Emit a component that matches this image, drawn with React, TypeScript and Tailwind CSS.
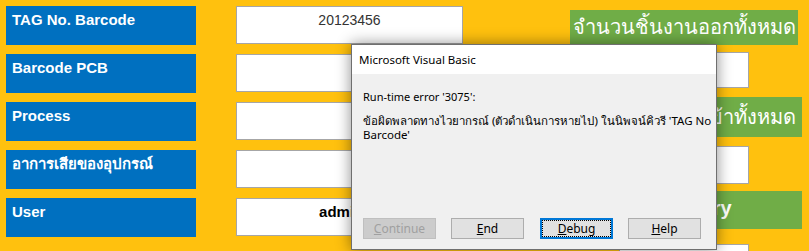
const labels = ["TAG No. Barcode", "Barcode PCB", "Process", "อาการเสียของอุปกรณ์", "User"];

const inputs = [
  { value: "20123456", cls: "text-[14px] text-[#333] font-normal text-center" },
  { value: "", cls: "" },
  { value: "", cls: "" },
  { value: "", cls: "" },
  { value: "admin01", cls: "text-[15px] text-black font-bold text-center" },
];

function DialogButton({
  first,
  rest,
  disabled,
  focused,
}: {
  first: string;
  rest: string;
  disabled?: boolean;
  focused?: boolean;
}) {
  return (
    <div
      className={
        "w-[73px] h-[21px] flex items-center justify-center text-[12px] " +
        (disabled
          ? "bg-[#cccccc] border border-[#bfbfbf] text-[#a0a0a0]"
          : focused
            ? "bg-[#e1e1e1] border-2 border-[#0078d7] text-black"
            : "bg-[#e1e1e1] border border-[#adadad] text-black")
      }
    >
      {focused ? (
        <span className="w-[67px] h-[15px] flex items-center justify-center outline outline-1 outline-dotted outline-black">
          <span className="underline">{first}</span>
          {rest}
        </span>
      ) : (
        <span>
          <span className="underline">{first}</span>
          {rest}
        </span>
      )}
    </div>
  );
}

export default function App() {
  return (
    <div
      className="relative w-[809px] h-[251px] overflow-hidden bg-[#ffc10e]"
      style={{ fontFamily: '"Liberation Sans", Arial, sans-serif' }}
    >
      <div className="flex">
        {/* labels */}
        <div className="flex flex-col gap-[9px] pt-[6px] pl-[6px] w-[196px]">
          {labels.map((l) => (
            <div
              key={l}
              className="h-[39px] bg-[#0070c0] text-white font-bold text-[15px] leading-[18px] pl-[6px] pt-[5px]"
            >
              {l}
            </div>
          ))}
        </div>

        {/* inputs */}
        <div className="flex flex-col gap-[10px] pt-[6px] ml-[40px] w-[227px]">
          {inputs.map((i, idx) => (
            <div
              key={idx}
              className={"h-[38px] bg-white border border-[#a6a6a6] pt-[4px] leading-[18px] " + i.cls}
            >
              {i.value}
            </div>
          ))}
        </div>

        {/* right summary column */}
        <div className="flex flex-col ml-[107px] pt-[10px] w-[232px]">
          <div className="h-[35px] w-[228px] bg-[#70ad47] text-white text-[20px] leading-[35px] text-center">
            จำนวนชิ้นงานออกทั้งหมด
          </div>
          <div className="h-[36px] w-[130px] ml-[49px] mt-[7px] bg-white border border-[#a6a6a6]" />
          <div className="h-[40px] w-[232px] mt-[9px] bg-[#70ad47] text-white text-[20px] leading-[40px] text-center">
            จำนวนชิ้นงานเข้าทั้งหมด
          </div>
          <div className="h-[38px] w-[130px] ml-[49px] mt-[9px] bg-white border border-[#a6a6a6]" />
          <div className="h-[38px] w-[232px] mt-[7px] bg-[#70ad47] text-white font-bold text-[20px] leading-[34px] text-center">
            Summary
          </div>
          <div className="h-[38px] w-[130px] ml-[49px] mt-[15px] bg-white border border-[#a6a6a6]" />
        </div>
      </div>

      {/* VBA error dialog */}
      <div
        className="absolute left-[351px] top-[44px] w-[366px] h-[206px] flex flex-col bg-[#f0f0f0] border border-[#6f6f6f] shadow-[0_0_14px_rgba(0,0,0,0.45)]"
        style={{ fontFamily: '"Noto Sans", "Liberation Sans", sans-serif' }}
      >
        <div className="h-[29px] bg-white pl-[7px] text-[11.5px] leading-[29px] text-black">
          Microsoft Visual Basic
        </div>
        <div className="flex-1 flex flex-col pl-[11px] pr-[10px] text-[11px] text-black">
          <div className="mt-[15px] leading-[16px]">Run-time error '3075':</div>
          <div className="mt-[9px] leading-[14px] text-[11.5px]">
            <span className="whitespace-nowrap">
              ข้อผิดพลาดทางไวยากรณ์ (ตัวดำเนินการหายไป) ในนิพจน์คิวรี 'TAG No
            </span>
            <br />
            Barcode'
          </div>
          <div className="mt-auto mb-[10px] flex gap-[15px]">
            <DialogButton first="C" rest="ontinue" disabled />
            <DialogButton first="E" rest="nd" />
            <div className="ml-[1px]">
              <DialogButton first="D" rest="ebug" focused />
            </div>
            <DialogButton first="H" rest="elp" />
          </div>
        </div>
      </div>
    </div>
  );
}
